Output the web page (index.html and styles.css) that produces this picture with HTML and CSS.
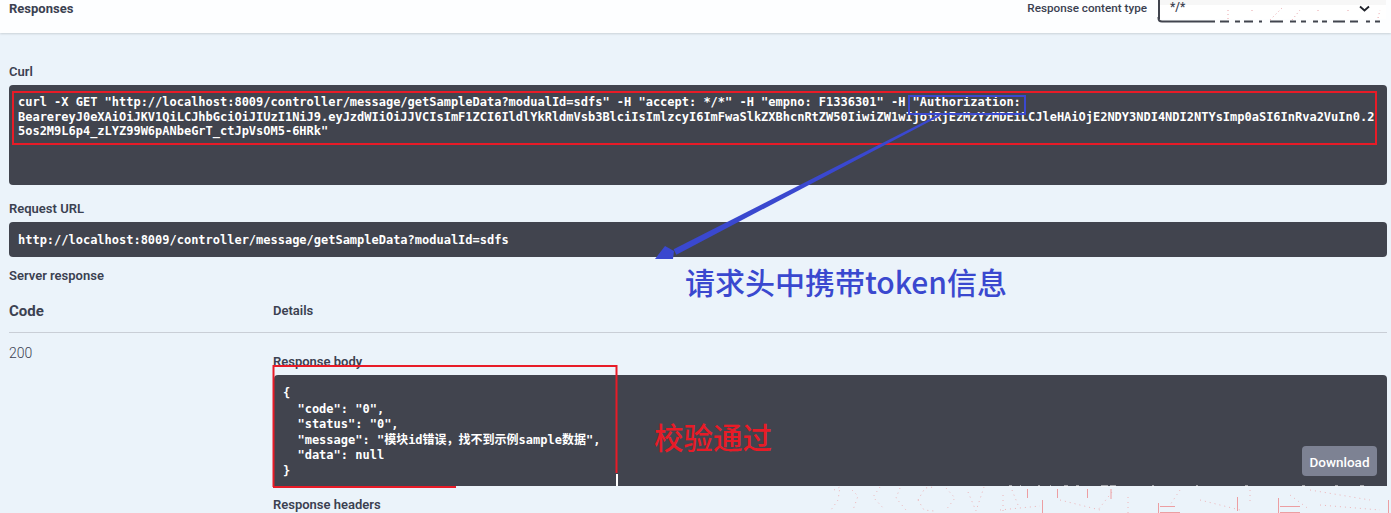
FILE: index.html
```html
<!DOCTYPE html>
<html lang="zh">
<head>
<meta charset="utf-8">
<title>Responses</title>
<link rel="stylesheet" href="styles.css">
</head>
<body>
<header class="top">
  <h4 class="top-title">Responses</h4>
  <div class="type">
    <span class="type-label">Response content type</span>
    <div class="select"><span>*/*</span>
      <svg class="chev" width="11" height="7" viewBox="0 0 11 7"><path d="M1 1.500 5.500 5.500 10 1.500" fill="none" stroke="#20232b" stroke-width="1.800"/></svg>
    </div>
  </div>
</header>
<main class="panel">
  <h5 class="label">Curl</h5>
  <pre class="code curl">curl -X GET "http://localhost:8009/controller/message/getSampleData?modualId=sdfs" -H "accept: */*" -H "empno: F1336301" -H "Authorization:
BearereyJ0eXAiOiJKV1QiLCJhbGciOiJIUzI1NiJ9.eyJzdWIiOiJJVCIsImF1ZCI6IldlYkRldmVsb3BlciIsImlzcyI6ImFwaSlkZXBhcnRtZW50IiwiZW1wIjoiRjEzMzYzMDEiLCJleHAiOjE2NDY3NDI4NDI2NTYsImp0aSI6InRva2VuIn0.2
5os2M9L6p4_zLYZ99W6pANbeGrT_ctJpVsOM5-6HRk"</pre>
  <h5 class="label url-label">Request URL</h5>
  <pre class="code url">http://localhost:8009/controller/message/getSampleData?modualId=sdfs</pre>
  <h5 class="label server">Server response</h5>
  <div class="head-row">
    <div class="col-code code-title">Code</div>
    <div class="details">Details</div>
  </div>
  <div class="row">
    <div class="col-code status">200</div>
    <div class="col-main">
      <h5 class="label body-label">Response body</h5>
      <div class="body-block">
<pre class="json">{
  "code": "0",
  "status": "0",
  "message": "模块id错误，找不到示例sample数据",
  "data": null
}</pre>
        <button class="download">Download</button>
      </div>
      <h5 class="label headers-label">Response headers</h5>
    </div>
  </div>
</main>

<div class="mark red-curl"></div>
<div class="mark blue-auth"></div>
<svg class="overlay" width="1391" height="513" viewBox="0 0 1391 513">
  <path d="M1158.500 17V18Q1158.500 21.500 1162 21.500H1215M1220 21.500H1229M1235 21.500H1240M1244 21.500H1253M1259 21.500H1262M1270 21.500H1283M1290 21.500H1296M1301 21.500H1306M1313 21.500H1318M1322 21.500H1327M1333 21.500H1345M1350 21.500H1358M1366 21.500H1370M1375 21.500H1380" fill="none" stroke="#41444e" stroke-width="2"/>
  <path d="M1228 10V20M1252 10V14M1270 20 1282 8M1292 20 1300 10M1318 10V14M1348 10V14M1378 18 1380 10" fill="none" stroke="#e9a3a8" stroke-width="1" stroke-dasharray="1 3"/>
  <path d="M940 115.900 939 114.200 673.600 249.300 676.400 254.700Z" fill="#3a48cf"/>
  <path d="M655 259 665 246 674 251 673 259Z" fill="#3a48cf"/>
  <path d="M273.500 487V366H616.500V473" fill="none" stroke="#e81b27" stroke-width="2"/>
  <path d="M273 487H456" fill="none" stroke="#e81b27" stroke-width="2"/>
  <path d="M617 474V486" fill="none" stroke="#ffffff" stroke-width="2"/>
  <path d="M1009 486H1012M1020 486H1021M1038 486H1040M1050 486H1051M1064 486H1068M1076 486H1079M1101 486H1108M1110 486H1116M1152 486H1154M1196 486H1198M1245 486H1248M1302 486H1305M1335 486H1338M1360 486H1364" fill="none" stroke="#ffffff" stroke-width="1"/>
  <path d="M834 490 840 487 838 500 831 510M852 490 858 496 853 510M880 487 873 497 885 510M900 488 896 498 906 510M918 500 925 488 934 487M918 500 924 510 934 511M946 488 955 498 946 510M968 492 976 511 984 487M1003 495V512M1012 490 1018 505M1000 510 1040 506M1060 500 1100 510M1112 492 1098 510M1128 497V513M1180 490 1170 505M1200 500 1240 510M1250 490V505M1290 495 1310 510M1310 490 1370 500M1320 505 1380 510" fill="none" stroke="#eeb4b8" stroke-width="1" stroke-dasharray="1 4"/>
  <path d="M1027.500 489V498M1042.500 500V513M1057.500 489V498M1087.500 489V498M1111 489V499M1158.500 503V513M1160 506.500H1175M1160 512.500H1180M1237.500 497V511M1278.500 498V513M1280 506.500H1300M1280 512.500H1300M1388.500 500V513" fill="none" stroke="#ec9ea2" stroke-width="1"/>
</svg>
<div class="note note-blue">请求头中携带token信息</div>
<div class="note note-red">校验通过</div>
</body>
</html>
```
FILE: styles.css
```css
html, body {
  margin: 0;
  height: 513px;
  overflow: hidden;
}
body {
  position: relative;
  background: #ebf3fa;
  color: #3b4151;
  font-family: Roboto, "Noto Sans", sans-serif;
}
.top {
  height: 33px;
  box-sizing: border-box;
  background: #fdfeff;
  box-shadow: 0 1px 2px rgba(0, 0, 0, .14);
  display: flex;
  justify-content: space-between;
  padding: 0 5px 0 9px;
}
.top-title {
  margin: 0;
  font-size: 13px;
  font-weight: 700;
  line-height: 17px;
}
.type {
  display: flex;
  gap: 11px;
}
.type-label {
  font-size: 11.700px;
  font-weight: 500;
  line-height: 17px;
}
.select {
  width: 228px;
  height: 19px;
  box-sizing: border-box;
  border-left: 2px solid #41444e;
  background: linear-gradient(#f7f7f7 5px, #fff 5px);
  font: 500 12px/14px Roboto, sans-serif;
  padding: 0 16px 0 10px;
  display: flex;
  justify-content: space-between;
}
.chev { margin-top: 5px; }
.panel {
  padding: 31px 4px 0 9px;
}
.label {
  margin: 0;
  font-size: 13px;
  font-weight: 600;
  line-height: 16px;
}
.code {
  margin: 5px 0 0;
  background: #41444e;
  border-radius: 4px;
  color: #fff;
  font: 700 12px/17px "DejaVu Sans Mono", monospace;
  letter-spacing: -.01px;
  padding: 9px;
  box-sizing: border-box;
}
.curl {
  height: 100px;
  white-space: pre-wrap;
  line-height: 14.700px;
  padding-top: 10px;
}
.url-label { margin-top: 16px; }
.url {
  height: 35px;
  padding-top: 10px;
  line-height: 17px;
}
.server { margin-top: 11px; }
.head-row {
  display: flex;
  align-items: center;
  height: 43px;
  padding-bottom: 1px;
  margin-top: 6px;
  border-bottom: 1px solid #c9ced6;
  box-sizing: border-box;
}
.col-code { width: 264px; flex: none; }
.code-title { font-size: 15px; font-weight: 700; }
.details { font-size: 13px; font-weight: 600; }
.row { display: flex; }
.status { font-size: 14px; line-height: 20px; margin-top: 10px; font-weight: 300; }
.col-main { flex: 1; }
.body-label { margin-top: 21px; }
.body-block {
  position: relative;
  height: 111px;
  margin: 5px 0 0 1px;
  background: #41444e;
  border-radius: 4px 4px 0 0;
}
.json {
  margin: 0;
  padding: 11px 9px;
  color: #fff;
  font: 700 12px/15.500px "DejaVu Sans Mono", "Noto Sans CJK SC", monospace;
}
.download {
  position: absolute;
  right: 10px;
  top: 71px;
  width: 75px;
  height: 30px;
  border: 0;
  border-radius: 4px;
  padding: 2px 0 0;
  background: #7d8293;
  color: #fff;
  font: 500 13.500px Roboto, sans-serif;
}
.headers-label { margin-top: 11px; }
.mark {
  position: absolute;
  box-sizing: border-box;
}
.red-curl {
  left: 12px;
  top: 91px;
  width: 1365px;
  height: 54px;
  border: 2px solid #e81b27;
}
.blue-auth {
  left: 908px;
  top: 95px;
  width: 118px;
  height: 20px;
  border: 2px solid #3a48cf;
}
.overlay {
  position: absolute;
  left: 0;
  top: 0;
  pointer-events: none;
}
.note {
  position: absolute;
  font-family: "Noto Sans CJK SC", "Noto Sans", sans-serif;
  font-weight: 500;
  white-space: nowrap;
}
.note-blue {
  left: 685px;
  top: 261px;
  font-size: 30px;
  line-height: 40px;
  color: #3a48cf;
}
.note-red {
  left: 654px;
  top: 415px;
  font-size: 29.500px;
  line-height: 42px;
  color: #e81b27;
}
```
